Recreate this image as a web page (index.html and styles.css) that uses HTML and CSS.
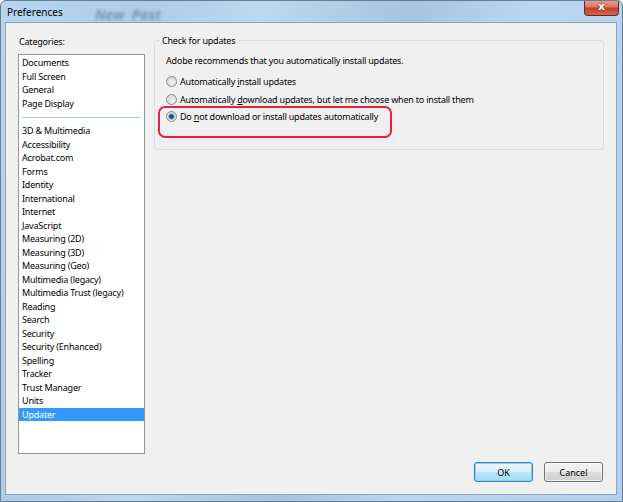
FILE: index.html
```html
<!DOCTYPE html>
<html lang="en">
<head>
  <meta charset="UTF-8" />
  <title>Preferences</title>
  <link rel="stylesheet" href="styles.css">
</head>
<body>
  <div class="window">
    <div class="titlebar">
      <span class="ghost">New Post</span>
      <span class="title">Preferences</span>
      <span class="close">x</span>
    </div>
    <div class="client">
      <div class="main">
        <div class="left">
          <div class="cap">Cate<u>g</u>ories:</div>
          <div class="list">
            <div class="item">Documents</div>
            <div class="item">Full Screen</div>
            <div class="item">General</div>
            <div class="item">Page Display</div>
            <div class="sep"></div>
            <div class="item">3D &amp; Multimedia</div>
            <div class="item">Accessibility</div>
            <div class="item">Acrobat.com</div>
            <div class="item">Forms</div>
            <div class="item">Identity</div>
            <div class="item">International</div>
            <div class="item">Internet</div>
            <div class="item">JavaScript</div>
            <div class="item">Measuring (2D)</div>
            <div class="item">Measuring (3D)</div>
            <div class="item">Measuring (Geo)</div>
            <div class="item">Multimedia (legacy)</div>
            <div class="item">Multimedia Trust (legacy)</div>
            <div class="item">Reading</div>
            <div class="item">Search</div>
            <div class="item">Security</div>
            <div class="item">Security (Enhanced)</div>
            <div class="item">Spelling</div>
            <div class="item">Tracker</div>
            <div class="item">Trust Manager</div>
            <div class="item">Units</div>
            <div class="item selected">Updater</div>
          </div>
        </div>
        <div class="right">
          <div class="group">
            <span class="legend">Check for updates</span>
            <div class="note">Adobe recommends that you automatically install updates.</div>
            <div class="opt"><span class="radio"></span>Automatically <u>i</u>nstall updates</div>
            <div class="opt"><span class="radio"></span>Automatically <u>d</u>ownload updates, but let me choose when to install them</div>
            <div class="opt"><span class="radio checked"></span>Do <u>n</u>ot download or install updates automatically</div>
            <div class="mark"></div>
          </div>
        </div>
      </div>
      <div class="footer">
        <button class="btn default">OK</button>
        <button class="btn">Cancel</button>
      </div>
    </div>
  </div>
</body>
</html>
```

FILE: styles.css
```css
body {
  margin: 0;
  font-family: "Noto Sans", "Open Sans", sans-serif;
  font-size: 9px;
  letter-spacing: -0.2px;
  color: #000;
}
.window {
  width: 623px;
  height: 502px;
  box-sizing: border-box;
  border: 1px solid #6a7c8e;
  border-radius: 6px 6px 0 0;
  background: linear-gradient(105deg, #b7d4f0 0%, #aecbe8 20%, #bcd8f2 35%, #a6c3df 55%, #b9d6f2 70%, #b3d1ee 100%);
  display: flex;
  flex-direction: column;
  overflow: hidden;
}
.titlebar {
  height: 21px;
  display: flex;
  align-items: flex-start;
  position: relative;
}
.title {
  font-size: 10px;
  letter-spacing: 0;
  margin: 4px 0 0 6px;
  position: relative;
}
.ghost {
  position: absolute;
  left: 94px;
  top: 4px;
  font-size: 14px;
  font-weight: bold;
  font-style: italic;
  letter-spacing: 0;
  color: rgba(60, 80, 110, 0.45);
  filter: blur(1.4px);
  word-spacing: 4px;
}
.close {
  margin-left: auto;
  margin-right: 3px;
  margin-top: -1px;
  width: 35px;
  height: 16px;
  box-sizing: border-box;
  border: 1px solid #5e2a22;
  border-top: none;
  border-radius: 0 0 4px 4px;
  background: linear-gradient(#e8a493 0%, #d87a63 45%, #c2402a 55%, #d4664b 100%);
  color: #fff;
  font: bold 11px "DejaVu Sans", sans-serif;
  text-align: center;
  line-height: 13px;
  text-shadow: 0 0 2px #6b1f12;
}
.client {
  flex: 1;
  margin: 0 5px 6px 4px;
  border: 1px solid #8ea3b9;
  background: #f0f0f0;
  display: flex;
  flex-direction: column;
}
.main {
  display: flex;
  padding: 12px 12px 0 12px;
  gap: 9px;
}
.left {
  width: 127px;
}
.cap {
  height: 13px;
  line-height: 13px;
  padding-left: 1px;
}
.list {
  margin-top: 6px;
  height: 397px;
  border: 1px solid #969696;
  background: #fff;
  padding-top: 1px;
}
.item {
  height: 13.5px;
  line-height: 13.5px;
  padding-left: 3px;
  white-space: nowrap;
}
.item.selected {
  background: #3399ff;
  color: #fff;
}
.sep {
  height: 1px;
  background: #9fcbf3;
  margin: 7px 4px 6px 3px;
}
.right {
  flex: 1;
  padding-top: 5px;
}
.group {
  position: relative;
  height: 95px;
  border: 1px solid #d5dfe5;
  border-radius: 3px;
  padding: 13px 0 0 11px;
}
.legend {
  position: absolute;
  top: -7px;
  left: 5px;
  padding: 0 2px;
  background: #f0f0f0;
  line-height: 13px;
}
.note {
  line-height: 13px;
  margin-bottom: 6px;
}
.opt {
  height: 17.5px;
  line-height: 17.5px;
  white-space: nowrap;
}
.radio {
  display: inline-block;
  width: 9px;
  height: 9px;
  border-radius: 50%;
  border: 1px solid #8e8f8f;
  background: radial-gradient(circle at 60% 60%, #f4f4f4 0%, #d6d6d6 70%, #c9c9c9 100%);
  margin-right: 3px;
  vertical-align: -2px;
}
.radio.checked {
  background: radial-gradient(circle, #0d2f4e 0%, #2a6da0 30%, #7fb3d9 45%, #e6e6e6 60%, #d6d6d6 100%);
}
.mark {
  position: absolute;
  left: 3px;
  top: 65px;
  width: 230px;
  height: 28px;
  border: 2px solid #e8203c;
  border-radius: 7px;
}
.footer {
  margin-top: auto;
  display: flex;
  justify-content: flex-end;
  gap: 11px;
  padding: 0 13px 12px 0;
}
.btn {
  width: 59px;
  height: 20px;
  font-family: "Noto Sans", "Open Sans", sans-serif;
  font-size: 9px;
  border: 1px solid #707070;
  border-radius: 3px;
  background: linear-gradient(#f2f2f2 0%, #ebebeb 50%, #dddddd 51%, #cfcfcf 100%);
  box-shadow: inset 0 0 0 1px rgba(255, 255, 255, 0.7);
  padding: 0;
  color: #000;
}
.btn.default {
  border-color: #3c7fb1;
  background: linear-gradient(#eaf6fd 0%, #d9f0fc 50%, #bee6fd 51%, #a7d9f5 100%);
  box-shadow: inset 0 0 0 1px #88d6fb;
}
```
